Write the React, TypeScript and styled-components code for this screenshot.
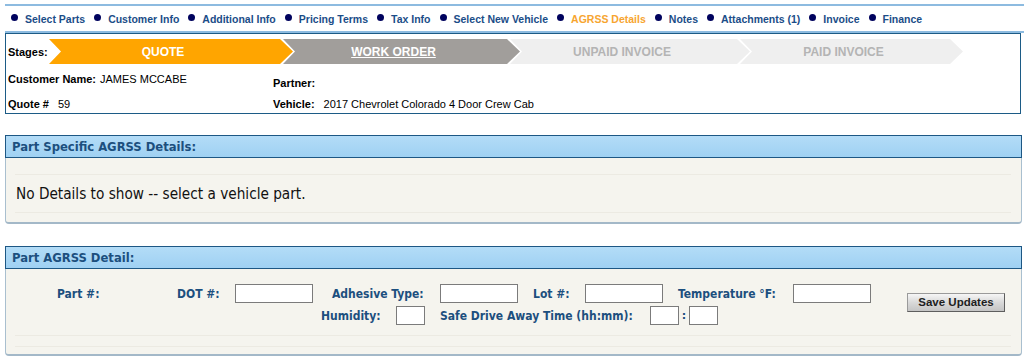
import React from "react";
import styled, { createGlobalStyle } from "styled-components";

const Global = createGlobalStyle`
  html, body { margin: 0; padding: 0; background: #fff; }
  body { font-family: "Liberation Sans", Arial, sans-serif; }
  * { box-sizing: border-box; }
`;

const Page = styled.div`
  width: 1024px;
  padding: 4px 0 0 5px;
`;

const Nav = styled.nav`
  display: flex;
  align-items: center;
  height: 29px;
  border-top: 2px solid #8dbbe0;
  border-bottom: 2px solid #8dbbe0;
  padding-left: 6px;
`;

const NavItem = styled.span<{ $active?: boolean }>`
  display: flex;
  align-items: center;
  margin-right: 9px;
  font-size: 10.5px;
  font-weight: bold;
  color: ${(p) => (p.$active ? "#f7a530" : "#1b4d88")};
  white-space: nowrap;
`;

const Bullet = styled.i`
  display: block;
  width: 7px;
  height: 7px;
  border-radius: 50%;
  background: #00035e;
  margin-right: 7px;
  margin-top: -3px;
`;

const StageBox = styled.section`
  width: 1016px;
  border: 1px solid #1c5b86;
  padding: 5px 0 0 2px;
`;

const StagesRow = styled.div`
  display: flex;
  align-items: center;
  height: 25px;
`;

const StagesLabel = styled.span`
  width: 41px;
  font-size: 11px;
  font-weight: bold;
  color: #000;
`;

const Chevron = styled.div<{ $bg: string; $fg: string; $w: number; $underline?: boolean }>`
  display: flex;
  align-items: center;
  justify-content: center;
  width: ${(p) => p.$w}px;
  height: 25px;
  padding: 0 28px 0 12px;
  background: ${(p) => p.$bg};
  color: ${(p) => p.$fg};
  font-size: 12px;
  font-weight: bold;
  text-decoration: ${(p) => (p.$underline ? "underline" : "none")};
  clip-path: polygon(0 0, calc(100% - 13px) 0, 100% 50%, calc(100% - 13px) 100%, 0 100%, 12px 50%);
  & + & {
    margin-left: -10px;
  }
`;

const InfoGrid = styled.div`
  display: grid;
  grid-template-columns: 265px 1fr;
  grid-template-rows: 28px 21px;
`;

const InfoCell = styled.div<{ $pt: number }>`
  display: flex;
  padding-top: ${(p) => p.$pt}px;
  font-size: 11px;
  line-height: 13px;
  color: #000;
`;

const InfoLabel = styled.b`
  font-weight: bold;
`;

const InfoValue = styled.span<{ $gap?: number }>`
  margin-left: ${(p) => p.$gap ?? 9}px;
`;

const Panel = styled.section<{ $mt: number }>`
  width: 1017px;
  margin-top: ${(p) => p.$mt}px;
`;

const PanelHeader = styled.h2`
  margin: 0;
  height: 23px;
  border: 1px solid #1d5784;
  background: linear-gradient(#b3dcf7, #9fd1f3);
  padding: 0 0 0 6px;
  display: flex;
  align-items: center;
  font-family: "DejaVu Sans Condensed", "DejaVu Sans", sans-serif;
  font-stretch: condensed;
  font-size: 12.9px;
  font-weight: bold;
  color: #1c4f7e;
`;

const PanelBody = styled.div<{ $pt: number; $pb: number }>`
  background: #f5f4ee;
  border-left: 1px solid #a9bfcf;
  border-right: 1px solid #a9bfcf;
  border-bottom: 2px solid #a3b8c8;
  border-radius: 0 0 4px 4px;
  padding: ${(p) => p.$pt}px 10px ${(p) => p.$pb}px 9px;
`;

const Lined = styled.div<{ $h: number }>`
  height: ${(p) => p.$h}px;
  border-top: 1px solid #eceae2;
  border-bottom: 1px solid #eceae2;
  display: flex;
  align-items: center;
  padding-left: 1px;
`;

const EmptyText = styled.p`
  margin: 0;
  font-family: "DejaVu Sans Condensed", "DejaVu Sans", sans-serif;
  font-stretch: condensed;
  font-size: 15.2px;
  color: #111;
`;

const Form = styled.div`
  display: flex;
  align-items: center;
`;

const FormLines = styled.div`
  display: flex;
  flex-direction: column;
  gap: 3px;
`;

const FormRow = styled.div<{ $indent: number }>`
  display: flex;
  align-items: center;
  padding-left: ${(p) => p.$indent}px;
`;

const FieldLabel = styled.label<{ $w: number }>`
  width: ${(p) => p.$w}px;
  font-family: "DejaVu Sans Condensed", "DejaVu Sans", sans-serif;
  font-stretch: condensed;
  font-size: 12px;
  font-weight: bold;
  color: #1c4f7e;
  white-space: nowrap;
`;

const Field = styled.input<{ $w: number; $mr?: number }>`
  width: ${(p) => p.$w}px;
  height: 19px;
  margin: 0 ${(p) => p.$mr ?? 0}px 0 0;
  padding: 0 2px;
  border: 1px solid #7b7b7b;
  background: #fff;
  font-size: 11px;
`;

const Colon = styled.span`
  width: 10px;
  text-align: center;
  font-family: "DejaVu Sans", sans-serif;
  font-size: 11px;
  font-weight: bold;
  color: #1c4f7e;
`;

const SaveButton = styled.button`
  margin: 0 0 5px 36px;
  width: 98px;
  height: 19px;
  padding: 0;
  background: linear-gradient(#f6f6f6, #d9d9d9 50%, #c4c4c4);
  border: 1px solid #9a9a9a;
  border-right-color: #5e5e5e;
  border-bottom-color: #5e5e5e;
  font-family: "Liberation Sans", Arial, sans-serif;
  font-size: 11.5px;
  font-weight: bold;
  color: #1e1e1e;
`;

const Footer = styled.div`
  margin-top: 10px;
  height: 12px;
  border-top: 1px solid #eceae2;
  border-bottom: 1px solid #eceae2;
`;

const navItems = [
  "Select Parts",
  "Customer Info",
  "Additional Info",
  "Pricing Terms",
  "Tax Info",
  "Select New Vehicle",
  "AGRSS Details",
  "Notes",
  "Attachments (1)",
  "Invoice",
  "Finance",
];

const stages = [
  { label: "QUOTE", bg: "#ffa500", fg: "#fff", w: 244 },
  { label: "WORK ORDER", bg: "#a19e9b", fg: "#fff", w: 237, underline: true },
  { label: "UNPAID INVOICE", bg: "#efefef", fg: "#b4b4b4", w: 240 },
  { label: "PAID INVOICE", bg: "#efefef", fg: "#b4b4b4", w: 223 },
];

export default function App() {
  return (
    <>
      <Global />
      <Page>
        <Nav>
          {navItems.map((n) => (
            <NavItem key={n} $active={n === "AGRSS Details"}>
              <Bullet />
              {n}
            </NavItem>
          ))}
        </Nav>
        <StageBox>
          <StagesRow>
            <StagesLabel>Stages:</StagesLabel>
            {stages.map((s) => (
              <Chevron key={s.label} $bg={s.bg} $fg={s.fg} $w={s.w} $underline={s.underline}>
                {s.label}
              </Chevron>
            ))}
          </StagesRow>
          <InfoGrid>
            <InfoCell $pt={9}>
              <InfoLabel>Customer Name:</InfoLabel>
              <InfoValue $gap={4}>JAMES MCCABE</InfoValue>
            </InfoCell>
            <InfoCell $pt={13}>
              <InfoLabel>Partner:</InfoLabel>
            </InfoCell>
            <InfoCell $pt={6}>
              <InfoLabel>Quote #</InfoLabel>
              <InfoValue>59</InfoValue>
            </InfoCell>
            <InfoCell $pt={6}>
              <InfoLabel>Vehicle:</InfoLabel>
              <InfoValue>2017 Chevrolet Colorado 4 Door Crew Cab</InfoValue>
            </InfoCell>
          </InfoGrid>
        </StageBox>

        <Panel $mt={21}>
          <PanelHeader>Part Specific AGRSS Details:</PanelHeader>
          <PanelBody $pt={16} $pb={9}>
            <Lined $h={39}>
              <EmptyText>No Details to show -- select a vehicle part.</EmptyText>
            </Lined>
          </PanelBody>
        </Panel>

        <Panel $mt={22}>
          <PanelHeader>Part AGRSS Detail:</PanelHeader>
          <PanelBody $pt={15} $pb={7}>
            <Form>
              <FormLines>
                <FormRow $indent={42}>
                  <FieldLabel $w={120}>Part #:</FieldLabel>
                  <FieldLabel $w={58}>DOT #:</FieldLabel>
                  <Field $w={78} $mr={19} />
                  <FieldLabel $w={108}>Adhesive Type:</FieldLabel>
                  <Field $w={78} $mr={15} />
                  <FieldLabel $w={52}>Lot #:</FieldLabel>
                  <Field $w={78} $mr={15} />
                  <FieldLabel $w={115}>Temperature °F:</FieldLabel>
                  <Field $w={78} />
                </FormRow>
                <FormRow $indent={306}>
                  <FieldLabel $w={75}>Humidity:</FieldLabel>
                  <Field $w={29} $mr={15} />
                  <FieldLabel $w={210}>Safe Drive Away Time (hh:mm):</FieldLabel>
                  <Field $w={29} />
                  <Colon>:</Colon>
                  <Field $w={29} />
                </FormRow>
              </FormLines>
              <SaveButton type="button">Save Updates</SaveButton>
            </Form>
            <Footer />
          </PanelBody>
        </Panel>
      </Page>
    </>
  );
}
